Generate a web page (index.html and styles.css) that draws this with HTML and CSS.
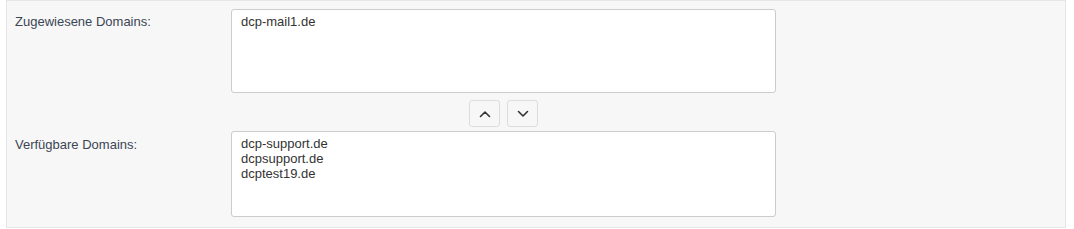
FILE: index.html
```html
<!DOCTYPE html>
<html lang="de">
<head>
<meta charset="utf-8">
<title>Domains</title>
<link rel="stylesheet" href="styles.css">
</head>
<body>
<div class="panel">
  <div class="row">
    <div class="label">Zugewiesene Domains:</div>
    <div class="field">
      <div class="list list-assigned">
        <div class="item">dcp-mail1.de</div>
      </div>
    </div>
  </div>
  <div class="row">
    <div class="label"></div>
    <div class="field move">
      <button class="btn" type="button" aria-label="nach oben">
        <svg width="12" height="8" viewBox="0 0 12 8"><path d="M1.5 6.5 L6 2 L10.5 6.5" fill="none" stroke="#333" stroke-width="1.6" stroke-linecap="round" stroke-linejoin="round"/></svg>
      </button>
      <button class="btn" type="button" aria-label="nach unten">
        <svg width="12" height="8" viewBox="0 0 12 8"><path d="M1.5 1.5 L6 6 L10.5 1.5" fill="none" stroke="#333" stroke-width="1.6" stroke-linecap="round" stroke-linejoin="round"/></svg>
      </button>
    </div>
  </div>
  <div class="row">
    <div class="label label-available">Verfügbare Domains:</div>
    <div class="field">
      <div class="list list-available">
        <div class="item">dcp-support.de</div>
        <div class="item">dcpsupport.de</div>
        <div class="item">dcptest19.de</div>
      </div>
    </div>
  </div>
</div>
</body>
</html>
```
FILE: styles.css
```css
html, body {
  margin: 0;
  padding: 0;
  background: #ffffff;
}
body {
  font-family: "Liberation Sans", Arial, Helvetica, sans-serif;
  font-size: 13px;
  line-height: 15px;
  color: #333333;
}
.panel {
  margin: 0 8px 0 6px;
  height: 228px;
  box-sizing: border-box;
  background: #f7f7f7;
  border: 1px solid #e6e6e6;
  padding: 8px 8px 0 8px;
}
.row {
  display: grid;
  grid-template-columns: 216px 545px;
}
.label {
  color: #3b4554;
  padding-top: 5px;
}
.label-available {
  padding-top: 6px;
}
.list {
  box-sizing: border-box;
  background: #ffffff;
  border: 1px solid #cccccc;
  border-radius: 3px;
  padding: 4px 9px;
}
.list-assigned {
  height: 84px;
}
.list-available {
  height: 86px;
  padding-top: 4px;
}
.move {
  display: flex;
  justify-content: center;
  gap: 7px;
  padding: 7px 0 4px 0;
}
.btn {
  width: 31px;
  height: 27px;
  box-sizing: border-box;
  background: #f7f7f7;
  border: 1px solid #dddddd;
  border-radius: 3px;
  padding: 0;
  display: flex;
  align-items: center;
  justify-content: center;
}
.btn svg {
  display: block;
}
```
